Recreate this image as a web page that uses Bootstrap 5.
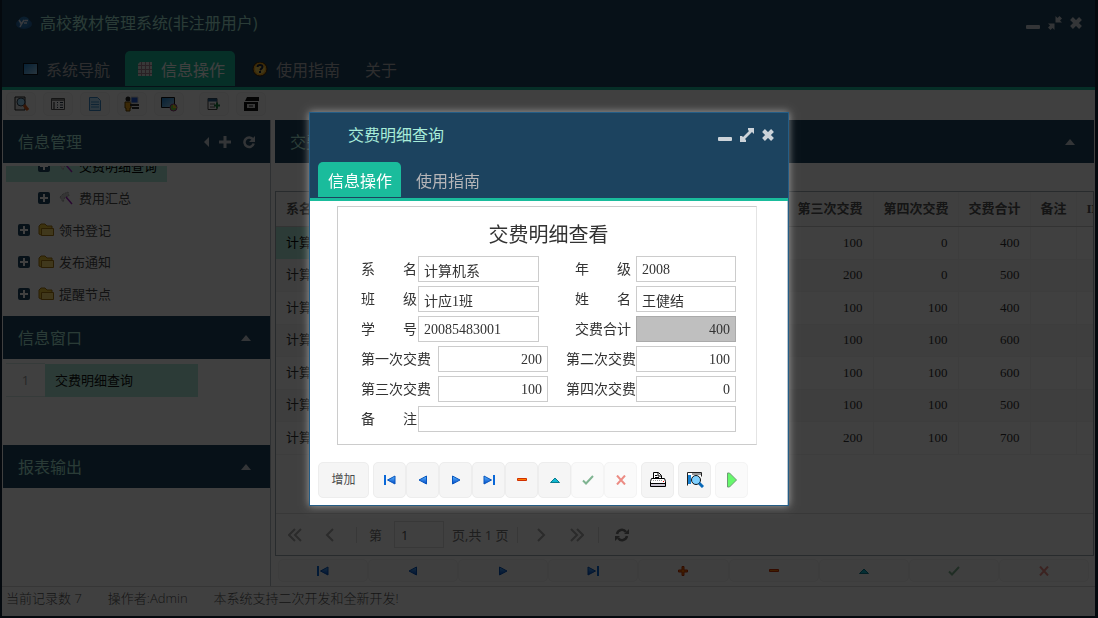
<!DOCTYPE html>
<html lang="zh-CN">
<head>
<meta charset="utf-8">
<meta name="viewport" content="width=device-width, initial-scale=1">
<title>高校教材管理系统</title>
<link href="https://cdn.jsdelivr.net/npm/bootstrap@5.3.0/dist/css/bootstrap.min.css" rel="stylesheet">
<style>
  :root { --navy: #1c435f; --teal: #1abc9c; --mint: #a8ecd9; --pick: #b0ecdb; }
  body { font-family: "Open Sans", "Noto Sans CJK SC", sans-serif; font-size: 13px; line-height: 20px; color: #4c4c4c; }
  svg { display: block; flex: none; }
  button { color: inherit; font: inherit; }
  .shell { min-height: 100vh; border: solid #10263a; border-width: 0 3px 2px 2px; background: #fff; }
  .navy { background: var(--navy); color: var(--mint); }
  .caption { font-size: 16px; line-height: 24px; }
  .main-title { height: 51px; padding: 0 13px 5px 14px; }
  .win-btn { border: 0; background: none; padding: 0; color: #ccd3d9; }
  .tab-strip { gap: 5px; border-bottom: 3px solid var(--teal); padding: 0 8px 1px; height: 39px; }
  .tab-strip .nav-link { height: 35px; padding: 2px 10px 0; gap: 8px; font-size: 16px; line-height: 24px; color: #b5b5b8; border-radius: 5px 5px 0 0; display: flex; align-items: center; white-space: nowrap; }
  .tab-strip .nav-link.active { background: var(--teal); color: #fff; }
  .dialog-tabs .nav-link { padding: 2px 9px 0 10px; }
  .tool { border: 1px solid #f1f1f1; border-radius: 5px; background: #fbfbfb; display: flex; align-items: center; justify-content: center; padding: 0; }
  .tool:disabled { background: #fafafa; }
  .tools-main { height: 30px; padding: 0 4px 2px; gap: 7px; }
  .tools-main .tool { width: 30px; height: 24px; }
  .side { width: 269px; border-right: 1px solid #b8c0c8; padding-left: 1px; }
  .panel-head { height: 43px; padding: 0 15px; flex: none; }
  .side-tree { height: 153px; border-top: 3px solid #fff; padding: 0 3px 6px; overflow: hidden; }
  .node { height: 32px; flex: none; }
  .node a { color: inherit; text-decoration: none; }
  .node.picked { padding-right: 10px; }
  .picked { background: var(--pick); color: #000; }
  .side-list { height: 86px; padding: 4px 3px; }
  .side-list td { height: 33px; padding: 0 10px; }
  .side-list .idx { width: 39px; padding: 0; text-align: center; border: solid #d8ece8; border-width: 1px 0; color: #999; }
  .side-list .name-cell { width: 153px; color: #111; }
  .work { padding: 0 1px 0 4px; min-width: 0; }
  .grid-box { border: 1px solid #a0abb4; overflow: hidden; }
  .data-grid { table-layout: fixed; width: 100%; min-width: 830px; font-family: "Liberation Serif", "Noto Sans CJK SC", serif; color: #333; }
  .data-grid th, .data-grid td { padding: 0 10px; overflow: hidden; white-space: nowrap; border-right: 1px solid #f2f2f2; }
  .data-grid th { height: 34px; border-bottom: 1px solid #ccc; background: #fafafa; color: #555; }
  .data-grid td { height: 33px; border-bottom: 1px solid #f4f4f4; }
  .data-grid tr:nth-child(even) td { height: 32px; background: #f7f7f7; }
  .data-grid tbody td.picked { background: var(--pick); }
  .data-grid .num { text-align: right; }
  .pager { height: 42px; border-top: 1px solid #ddd; padding: 0 12px; color: #777; }
  .pager .win-btn { color: #aaa; width: 16px; }
  .pager .rule { width: 1px; height: 16px; background: #ddd; }
  .pager input { width: 50px; height: 27px; border: 1px solid #ddd; padding: 0 6px; color: #555; }
  .record-nav { padding: 3px 5px 4px 3px; }
  .record-nav .tool { height: 23px; flex: 1; }
  .status { height: 30px; border-top: 1px solid #d8d8d8; padding: 0 4px 7px; gap: 26px; font-weight: 300; color: #555; }
  .shade { background: rgba(0, 0, 0, .75); }
  .dlg { width: 480px; border: 1px solid #245d86; background: #fff; box-shadow: 0 0 8px rgba(255, 255, 255, .5); }
  .dlg-title { height: 49px; padding: 0 14px 6px 38px; }
  .dlg-main { padding: 5px 8px 7px; border-right: 1px solid #b9c5ce; }
  .sheet { margin: 0 22px 17px 19px; padding: 14px 20px 12px 23px; border: 1px solid #ccc; border-right-color: #e4e4e4; font-family: "Liberation Serif", "Noto Sans CJK SC", serif; font-size: 14px; color: #333; }
  .sheet h1 { font-size: 20px; line-height: 28px; font-weight: 400; margin: 0 0 7px; text-align: center; }
  .line { height: 26px; margin-bottom: 4px; }
  .line label { white-space: pre; width: 57px; padding-top: 4px; }
  .line .lab-r { width: 61px; }
  .line .lab-fee { width: 77px; }
  .line .lab-fee-r { width: 70px; }
  .line input { height: 26px; width: 100px; border: 1px solid #ccc; padding: 2px 5px 0; color: #333; }
  .line .in-text { width: 121px; }
  .line .in-fee { width: 110px; }
  .line .total { background: #bfbfbf; border-color: #aaa; }
  .dlg-tools { gap: 4px; }
  .dlg-tools .tool { width: 33px; height: 36px; background: #f5f5f5; border-color: #ededed; }
  .dlg-tools .tool:disabled, .dlg-tools .tool.pale { background: #fafafa; border-color: #f4f4f4; }
  .dlg-tools .tool.word { width: 51px; font-size: 12px; }
</style>
</head>
<body>
<svg width="0" height="0" class="position-absolute" aria-hidden="true">
  <linearGradient id="blue" x2="0" y2="1"><stop stop-color="#5cb8ff"/><stop offset="1" stop-color="#0048c8"/></linearGradient>
  <linearGradient id="scr" x2="1" y2="1"><stop stop-color="#1680d0"/><stop offset="1" stop-color="#a8d8f8"/></linearGradient>
  <symbol id="i-first" viewBox="0 0 12 10"><path fill="#0a68d8" d="M0 0h2v10H0z"/><path fill="url(#blue)" stroke="#0755bd" d="M11 1v8L3.500 5z"/></symbol>
  <symbol id="i-prev" viewBox="0 0 12 10"><path fill="url(#blue)" stroke="#0755bd" d="M9.500 1v8L2 5z"/></symbol>
  <symbol id="i-next" viewBox="0 0 12 10"><path fill="url(#blue)" stroke="#0755bd" d="M2.500 1v8L10 5z"/></symbol>
  <symbol id="i-last" viewBox="0 0 12 10"><path fill="#0a68d8" d="M10 0h2v10h-2z"/><path fill="url(#blue)" stroke="#0755bd" d="M1 1v8l7.500-4z"/></symbol>
  <symbol id="i-del" viewBox="0 0 12 10"><path fill="#ff7a00" stroke="#d03000" d="M1.500 3.500h9v2h-9z"/></symbol>
  <symbol id="i-add" viewBox="0 0 12 12"><path fill="#ff7a00" stroke="#c83000" d="M5 1.500h2V5h3.500v2H7v3.500H5V7H1.500V5H5z"/></symbol>
  <symbol id="i-up" viewBox="0 0 12 10"><path fill="#10b8d0" stroke="#087c90" d="M1.500 7.500h9L6 3z"/></symbol>
  <symbol id="i-ok" viewBox="0 0 12 10"><path fill="none" stroke="#7fb491" stroke-width="2" d="M1 5.500l3 3L11 1"/></symbol>
  <symbol id="i-no" viewBox="0 0 12 10"><path fill="none" stroke="#ec8c84" stroke-width="2" d="M2 .500l8 9M10 .500l-8 9"/></symbol>
  <symbol id="i-min" viewBox="0 0 14 14"><rect y="9" width="14" height="4" rx="1" fill="currentColor"/></symbol>
  <symbol id="i-max" viewBox="0 0 14 14"><path fill="currentColor" d="M8 0h6v6l-2-2-7 7 1 1v2H0V8h2l1 1 6-6-1-1z"/></symbol>
  <symbol id="i-restore" viewBox="0 0 14 14"><path fill="currentColor" d="M7.500 0v6.500H14L12 4.500l2-2L11.500 0l-2 2zM6.500 14V7.500H0l2 2-2 2L2.500 14l2-2z"/></symbol>
  <symbol id="i-x" viewBox="0 0 12 12"><path stroke="currentColor" stroke-width="4" d="M1.500 1.500l9 9M10.500 1.500l-9 9"/></symbol>
  <symbol id="i-caret" viewBox="0 0 10 6"><path fill="currentColor" d="M0 6h10L5 0z"/></symbol>
  <symbol id="i-box" viewBox="0 0 12 12"><rect width="12" height="12" rx="2" fill="#1c435f"/><path fill="#fff" d="M5 2h2v3h3v2H7v3H5V7H2V5h3z"/></symbol>
  <symbol id="i-wand" viewBox="0 0 17 14"><path fill="#d4d4d4" stroke="#aaa" stroke-dasharray="2 1" d="M2 6l3-3 5-2 1 4-4 1-2 5z"/><path stroke="#a020c0" stroke-width="1.500" d="M8 6l6 7"/></symbol>
  <symbol id="i-folder" viewBox="0 0 17 14"><path fill="#f0c838" stroke="#a87810" d="M1 11V3l2-2h4l2 2h5v9H3z"/><path fill="#ffe070" stroke="#a87810" d="M3.500 5.500h12v7h-12z"/></symbol>
  <symbol id="i-find" viewBox="0 0 18 16"><path fill="#fff" stroke="#222" d="M1.500 13.500v-13h14v4"/><path fill="#1680d0" d="M2 3h3v9H2z"/><path fill="#999" d="M6 1h9v2H6z"/><circle cx="10" cy="8" r="4.500" fill="#7ed0ff" stroke="#111"/><path stroke="#0868b8" stroke-width="3" d="M13 11l4 4"/></symbol>
</svg>

<div class="shell d-flex flex-column">
  <header class="navy">
    <div class="main-title d-flex align-items-center justify-content-between">
      <div class="d-flex align-items-center gap-2">
        <svg width="16" height="14" viewBox="0 0 16 14"><ellipse cx="8" cy="8" rx="8" ry="5" fill="#2468a8"/><circle cx="8" cy="6" r="5.500" fill="#2878b8"/><path d="M3 4l2.500 4L8 4M5.500 8L4 11M8 7h3M8.500 4.500H12" fill="none" stroke="#dfe8f8" stroke-width="1.500"/></svg>
        <span class="caption">高校教材管理系统(非注册用户)</span>
      </div>
      <div class="d-flex gap-2 align-items-center">
        <button class="win-btn" aria-label="最小化"><svg width="14" height="14"><use href="#i-min"/></svg></button>
        <button class="win-btn" aria-label="还原"><svg width="14" height="14"><use href="#i-restore"/></svg></button>
        <button class="win-btn" aria-label="关闭"><svg width="12" height="12"><use href="#i-x"/></svg></button>
      </div>
    </div>
    <nav class="nav tab-strip flex-nowrap">
      <a class="nav-link" href="#"><svg width="18" height="16"><rect x="3.500" y="1.500" width="14" height="11" fill="url(#scr)" stroke="#081018"/></svg>系统导航</a>
      <a class="nav-link active" href="#"><svg width="18" height="16"><path d="M5 0h12v14H3V2z" fill="#ddd"/><path d="M3 3.500h14M3 7.500h14M3 11.500h14M6.500 0v14M10.500 0v14M14.500 0v14" stroke="#a98594"/></svg>信息操作</a>
      <a class="nav-link" href="#"><svg width="18" height="16"><circle cx="10" cy="7" r="7" fill="#f4a818" stroke="#302010"/><circle cx="10" cy="7" r="5" fill="#ffd858"/><path d="M7.500 5q0-2 2.500-2t2.500 2q0 1-2.500 3M10 9v2" fill="none" stroke="#18243c" stroke-width="2"/></svg>使用指南</a>
      <a class="nav-link" href="#">关于</a>
    </nav>
  </header>

  <div class="tools-main d-flex align-items-center">
    <button class="tool" aria-label="查询"><svg width="16" height="16"><path d="M2 1h10v13H2z" fill="#ddd" stroke="#222"/><circle cx="8" cy="6" r="4" fill="#9cdcff" stroke="#345"/><path d="M11 9l4 5" stroke="#d85818" stroke-width="3"/></svg></button>
    <button class="tool" aria-label="列表"><svg width="14" height="14"><path d="M.500 1.500h13v11H.500z" fill="#fff" stroke="#555"/><path d="M1 3h12" stroke="#888" stroke-width="2"/><path d="M3 5v7" stroke="#888" stroke-width="2"/><path d="M6 5.500h1m2 0h3M6 8h1m2 0h3M6 10.500h1m2 0h3" stroke="#234"/></svg></button>
    <button class="tool" aria-label="文档"><svg width="14" height="16"><path d="M1.500 1.500h8l3 3v10h-11z" fill="#b8e4ff" stroke="#3888c8"/><path d="M3 6h8M3 8.500h8M3 11h8" stroke="#3c90d0"/></svg></button>
    <button class="tool" aria-label="人员"><svg width="16" height="16"><circle cx="4" cy="3" r="2.500" fill="#222"/><path d="M1 6h6v6H6v3H2v-3H1z" fill="#e8a018" stroke="#604000"/><path d="M7 1h7v6H7z" fill="#2058d8" stroke="#ccc"/><path d="M6 9h9M8 12h7" stroke="#333" stroke-width="2"/></svg></button>
    <button class="tool" aria-label="系统"><svg width="17" height="16"><path d="M.500 1.500h13v10H.500z" fill="url(#scr)" stroke="#111"/><circle cx="12.500" cy="11.500" r="3.500" fill="#70d040" stroke="#902880"/><path d="M12 8v4h4" fill="#f8c020"/></svg></button>
    <button class="tool ms-2" aria-label="导出"><svg width="14" height="14"><path d="M1 1.500h9v11H1z" fill="#fff" stroke="#444"/><path d="M1 3h9" stroke="#28608c" stroke-width="3"/><path d="M3 7h5M3 10h5" stroke="#555"/><path d="M7 8.500h6M10 5.500v6" stroke="#188040" stroke-width="2"/></svg></button>
    <button class="tool" aria-label="打印"><svg width="16" height="16"><path d="M4 1h12v4H2zM1 6h14v9H1z" fill="#111"/><path d="M4 8h8v4H4z" fill="#ddd"/><path d="M6 10h4" stroke="#111"/></svg></button>
  </div>

  <div class="d-flex flex-grow-1">
    <aside class="side d-flex flex-column flex-shrink-0">
      <div class="panel-head navy d-flex align-items-center">
        <span class="caption me-auto">信息管理</span>
        <div class="d-flex gap-2 align-items-center">
          <button class="win-btn" aria-label="收起"><svg width="12" height="12"><path d="M10 1v10L5 6z" fill="currentColor"/></svg></button>
          <button class="win-btn me-1" aria-label="展开"><svg width="12" height="12"><path d="M4.500 0h3v4.500H12v3H7.500V12h-3V7.500H0v-3h4.500z" fill="currentColor"/></svg></button>
          <button class="win-btn" aria-label="刷新"><svg width="12" height="14"><path d="M10 4.500a4.700 4.700 0 1 0 .700 4" fill="none" stroke="currentColor" stroke-width="2.500"/><path d="M12 1v6H6z" fill="currentColor"/></svg></button>
        </div>
      </div>
      <div class="side-tree d-flex flex-column justify-content-end align-items-start">
        <div class="node picked d-flex align-items-center ps-4"><svg class="ms-2 me-2" width="12" height="12"><use href="#i-box"/></svg><svg width="17" height="14"><use href="#i-wand"/></svg><a href="#" class="ms-1">交费明细查询</a></div>
        <div class="node d-flex align-items-center ps-4"><svg class="ms-2 me-2" width="12" height="12"><use href="#i-box"/></svg><svg width="17" height="14"><use href="#i-wand"/></svg><a href="#" class="ms-1">费用汇总</a></div>
        <div class="node d-flex align-items-center ps-2"><svg class="ms-1 me-2" width="12" height="12"><use href="#i-box"/></svg><svg width="17" height="14"><use href="#i-folder"/></svg><a href="#" class="ms-1">领书登记</a></div>
        <div class="node d-flex align-items-center ps-2"><svg class="ms-1 me-2" width="12" height="12"><use href="#i-box"/></svg><svg width="17" height="14"><use href="#i-folder"/></svg><a href="#" class="ms-1">发布通知</a></div>
        <div class="node d-flex align-items-center ps-2"><svg class="ms-1 me-2" width="12" height="12"><use href="#i-box"/></svg><svg width="17" height="14"><use href="#i-folder"/></svg><a href="#" class="ms-1">提醒节点</a></div>
      </div>
      <div class="panel-head navy d-flex align-items-center justify-content-between"><span class="caption">信息窗口</span><button class="win-btn me-1" aria-label="折叠"><svg width="10" height="6"><use href="#i-caret"/></svg></button></div>
      <div class="side-list"><table><tbody><tr><td class="idx">1</td><td class="name-cell picked">交费明细查询</td></tr></tbody></table></div>
      <div class="panel-head navy d-flex align-items-center justify-content-between"><span class="caption">报表输出</span><button class="win-btn me-1" aria-label="折叠"><svg width="10" height="6"><use href="#i-caret"/></svg></button></div>
    </aside>

    <main class="work d-flex flex-column flex-grow-1">
      <div class="panel-head navy d-flex align-items-center justify-content-between mb-4"><span class="caption">交费明细查询</span><button class="win-btn me-1" aria-label="折叠"><svg width="10" height="6"><use href="#i-caret"/></svg></button></div>
      <div class="grid-box d-flex flex-column flex-grow-1 mt-1">
        <div class="flex-grow-1">
        <table class="data-grid">
          <colgroup><col width="85"><col width="45"><col width="60"><col width="96"><col width="55"><col width="85"><col width="85"><col width="86"><col width="85"><col width="72"><col width="46"><col></colgroup>
          <thead><tr><th>系名</th><th>年级</th><th>班级</th><th>学号</th><th>姓名</th><th>第一次交费</th><th>第二次交费</th><th>第三次交费</th><th>第四次交费</th><th>交费合计</th><th>备注</th><th>ID</th></tr></thead>
          <tbody>
            <tr><td class="picked">计算机系</td><td></td><td></td><td></td><td></td><td></td><td></td><td class="num">100</td><td class="num">0</td><td class="num">400</td><td></td><td></td></tr>
            <tr><td>计算机系</td><td></td><td></td><td></td><td></td><td></td><td></td><td class="num">200</td><td class="num">0</td><td class="num">500</td><td></td><td></td></tr>
            <tr><td>计算机系</td><td></td><td></td><td></td><td></td><td></td><td></td><td class="num">100</td><td class="num">100</td><td class="num">400</td><td></td><td></td></tr>
            <tr><td>计算机系</td><td></td><td></td><td></td><td></td><td></td><td></td><td class="num">100</td><td class="num">100</td><td class="num">600</td><td></td><td></td></tr>
            <tr><td>计算机系</td><td></td><td></td><td></td><td></td><td></td><td></td><td class="num">100</td><td class="num">100</td><td class="num">600</td><td></td><td></td></tr>
            <tr><td>计算机系</td><td></td><td></td><td></td><td></td><td></td><td></td><td class="num">100</td><td class="num">100</td><td class="num">500</td><td></td><td></td></tr>
            <tr><td>计算机系</td><td></td><td></td><td></td><td></td><td></td><td></td><td class="num">200</td><td class="num">100</td><td class="num">700</td><td></td><td></td></tr>
          </tbody>
        </table>
        </div>
        <div class="pager d-flex align-items-center">
          <button class="win-btn" aria-label="首页"><svg width="14" height="14"><path d="M7 1L1 7l6 6M13 1L7 7l6 6" fill="none" stroke="currentColor" stroke-width="2"/></svg></button>
          <button class="win-btn ms-3 me-3 px-1" aria-label="上一页"><svg width="14" height="14"><path d="M9 1L3 7l6 6" fill="none" stroke="currentColor" stroke-width="2"/></svg></button>
          <span class="rule ms-1 me-2"></span>
          <label for="pg" class="ms-1 me-2 pe-1">第</label><input id="pg" value="1" type="text">
          <span class="ms-2 me-2">页,共 1 页</span>
          <span class="rule me-3"></span>
          <button class="win-btn" aria-label="下一页"><svg width="14" height="14"><path d="M4 1l6 6-6 6" fill="none" stroke="currentColor" stroke-width="2"/></svg></button>
          <button class="win-btn ms-3 me-3 px-1" aria-label="末页"><svg width="14" height="14"><path d="M1 1l6 6-6 6M7 1l6 6-6 6" fill="none" stroke="currentColor" stroke-width="2"/></svg></button>
          <span class="rule me-3"></span>
          <button class="win-btn" aria-label="刷新"><svg width="14" height="14"><path d="M2 6a5 5 0 0 1 9-2M12 8a5 5 0 0 1-9 2" fill="none" stroke="#777" stroke-width="2.500"/><path d="M14 1v5H9zM0 13V8h5z" fill="#777"/></svg></button>
        </div>
      </div>
      <div class="record-nav d-flex">
        <button class="tool" aria-label="第一条"><svg width="12" height="10"><use href="#i-first"/></svg></button>
        <button class="tool" aria-label="上一条"><svg width="12" height="10"><use href="#i-prev"/></svg></button>
        <button class="tool" aria-label="下一条"><svg width="12" height="10"><use href="#i-next"/></svg></button>
        <button class="tool" aria-label="最后一条"><svg width="12" height="10"><use href="#i-last"/></svg></button>
        <button class="tool" aria-label="增加"><svg width="12" height="12"><use href="#i-add"/></svg></button>
        <button class="tool" aria-label="删除"><svg width="12" height="10"><use href="#i-del"/></svg></button>
        <button class="tool" aria-label="编辑"><svg width="12" height="10"><use href="#i-up"/></svg></button>
        <button class="tool" disabled aria-label="保存"><svg width="12" height="10"><use href="#i-ok"/></svg></button>
        <button class="tool" disabled aria-label="取消"><svg width="12" height="10"><use href="#i-no"/></svg></button>
      </div>
    </main>
  </div>
  <footer class="status d-flex align-items-center"><span>当前记录数 7</span><span>操作者:Admin</span><span>本系统支持二次开发和全新开发!</span></footer>
</div>

<div class="shade position-fixed top-0 start-0 w-100 h-100 d-flex align-items-center justify-content-center">
  <section class="dlg" role="dialog" aria-label="交费明细查询">
    <div class="navy">
      <div class="dlg-title d-flex align-items-center justify-content-between">
        <span class="caption">交费明细查询</span>
        <div class="d-flex gap-2 align-items-center">
          <button class="win-btn" aria-label="最小化"><svg width="14" height="14"><use href="#i-min"/></svg></button>
          <button class="win-btn" aria-label="最大化"><svg width="14" height="14"><use href="#i-max"/></svg></button>
          <button class="win-btn" aria-label="关闭"><svg width="12" height="12"><use href="#i-x"/></svg></button>
        </div>
      </div>
      <nav class="nav tab-strip dialog-tabs flex-nowrap"><a class="nav-link active" href="#">信息操作</a><a class="nav-link" href="#">使用指南</a></nav>
    </div>
    <div class="dlg-main">
      <form class="sheet">
        <h1>交费明细查看</h1>
        <div class="line d-flex justify-content-between"><div class="d-flex"><label for="f1">系　　名</label><input id="f1" class="in-text" value="计算机系"></div><div class="d-flex"><label for="f2" class="lab-r">年　　级</label><input id="f2" value="2008"></div></div>
        <div class="line d-flex justify-content-between"><div class="d-flex"><label for="f3">班　　级</label><input id="f3" class="in-text" value="计应1班"></div><div class="d-flex"><label for="f4" class="lab-r">姓　　名</label><input id="f4" value="王健结"></div></div>
        <div class="line d-flex justify-content-between"><div class="d-flex"><label for="f5">学　　号</label><input id="f5" class="in-text" value="20085483001"></div><div class="d-flex"><label for="f6" class="lab-r">交费合计</label><input id="f6" class="total text-end" value="400" readonly></div></div>
        <div class="line d-flex justify-content-between"><div class="d-flex"><label for="f7" class="lab-fee">第一次交费</label><input id="f7" class="in-fee text-end" value="200"></div><div class="d-flex"><label for="f8" class="lab-fee-r">第二次交费</label><input id="f8" class="text-end" value="100"></div></div>
        <div class="line d-flex justify-content-between"><div class="d-flex"><label for="f9" class="lab-fee">第三次交费</label><input id="f9" class="in-fee text-end" value="100"></div><div class="d-flex"><label for="f10" class="lab-fee-r">第四次交费</label><input id="f10" class="text-end" value="0"></div></div>
        <div class="line d-flex mb-0"><label for="f11">备　　注</label><input id="f11" class="flex-grow-1"></div>
      </form>
      <div class="dlg-tools d-flex">
        <button class="tool word">增加</button>
        <div class="d-flex">
          <button class="tool" aria-label="第一条"><svg width="12" height="10"><use href="#i-first"/></svg></button>
          <button class="tool" aria-label="上一条"><svg width="12" height="10"><use href="#i-prev"/></svg></button>
          <button class="tool" aria-label="下一条"><svg width="12" height="10"><use href="#i-next"/></svg></button>
          <button class="tool" aria-label="最后一条"><svg width="12" height="10"><use href="#i-last"/></svg></button>
          <button class="tool" aria-label="删除"><svg width="12" height="10"><use href="#i-del"/></svg></button>
          <button class="tool" aria-label="编辑"><svg width="12" height="10"><use href="#i-up"/></svg></button>
          <button class="tool" disabled aria-label="保存"><svg width="12" height="10"><use href="#i-ok"/></svg></button>
          <button class="tool" disabled aria-label="取消"><svg width="12" height="10"><use href="#i-no"/></svg></button>
        </div>
        <button class="tool" aria-label="打印"><svg width="16" height="16"><path d="M3.500 6V.500h5l3 3V6M1.500 6.500h13l1 3v5H.500v-5z" fill="#fff" stroke="#000"/><path d="M5 3.500h2M5 5.500h4M.500 11.500h15M8 1v3h3" fill="none" stroke="#000"/><path d="M1 12h14v2H1z" fill="#c8c4d0"/><path d="M3 8.500h9" stroke="#999" stroke-dasharray="1 1"/><path d="M13 9h1v1h-1z" fill="red"/></svg></button>
        <button class="tool" aria-label="预览"><svg width="18" height="16"><use href="#i-find"/></svg></button>
        <button class="tool pale" aria-label="运行"><svg width="12" height="16"><path d="M1.500 1v14h2L10.500 8l-7-7z" fill="#66f86c" stroke="#6d9c74"/></svg></button>
      </div>
    </div>
  </section>
</div>
<script src="https://cdn.jsdelivr.net/npm/bootstrap@5.3.0/dist/js/bootstrap.bundle.min.js"></script>
</body>
</html>
